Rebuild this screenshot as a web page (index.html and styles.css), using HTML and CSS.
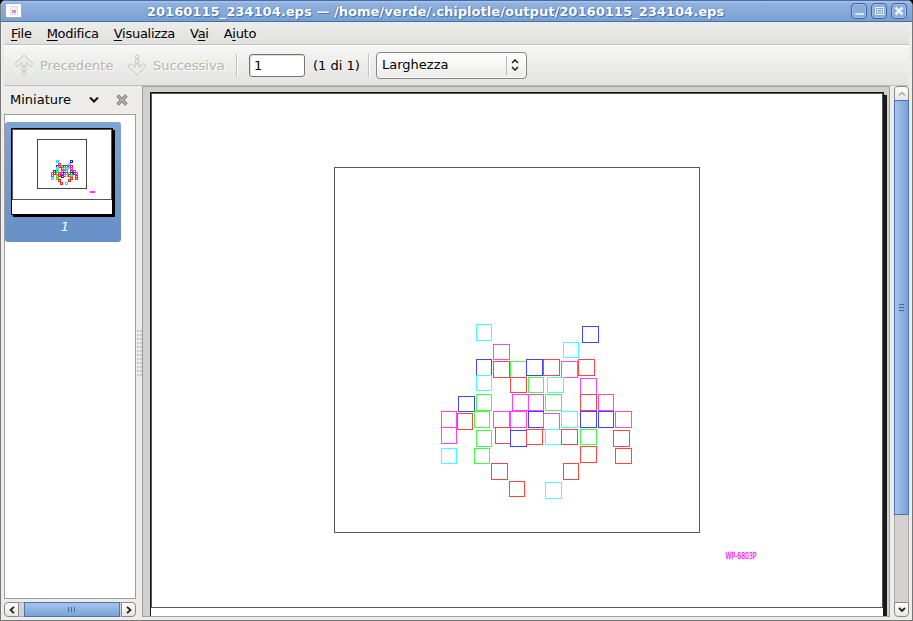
FILE: index.html
```
<!DOCTYPE html>
<html lang="it">
<head>
<meta charset="utf-8">
<title>20160115_234104.eps</title>
<link rel="stylesheet" href="styles.css">
</head>
<body>
<div class="window">
  <header class="titlebar">
    <svg class="app-icon" width="16" height="14" viewBox="0 0 16 14"><path d="M0 0h16v14H0z" fill="#aaa"/><path d="M0 0h15v13H0z" fill="#fff"/><path d="M4.500 2.500h7v8h-7z" fill="#f5eff8" stroke="#ddd"/><path d="M6 6h4v3H6z" fill="#b69ad6"/></svg>
    <h1>20160115_234104.eps — /home/verde/.chiplotle/output/20160115_234104.eps</h1>
    <div class="controls">
      <button aria-label="Riduci"><svg width="14" height="14"><path d="M3.500 9.500h8v1h-8z" fill="#fff" stroke="#d9e6f8"/></svg></button>
      <button aria-label="Massimizza"><svg width="14" height="14" fill="none" stroke="#eef4fc" shape-rendering="crispEdges"><path d="M3.500 3.500h8v7h-8z"/><path d="M5.500 5.500h4v3h-4z" stroke="#d4e2f5"/></svg></button>
      <button aria-label="Chiudi"><svg width="14" height="14"><path d="M3.500 3.500l7 7m0-7l-7 7" stroke="#e9f1fc" stroke-width="2.500"/></svg></button>
    </div>
  </header>
  <nav class="menubar"><span><u>F</u>ile</span><span><u>M</u>odifica</span><span><u>V</u>isualizza</span><span>V<u>a</u>i</span><span>A<u>i</u>uto</span></nav>
  <div class="toolbar">
    <svg class="arrow" width="20" height="22" viewBox="0 0 20 22"><g fill="#ededec" stroke="#c4c4c1"><path d="M10 1l9 9-2.500 2.500L12 8.500v3.500H8V8.500l-4.500 4L1 10z"/><circle cx="10" cy="14.500" r="2"/><circle cx="10" cy="19" r="2"/></g></svg>
    <span class="disabled prev">Precedente</span>
    <svg class="arrow" width="20" height="22" viewBox="0 0 20 22"><g fill="#ededec" stroke="#c4c4c1"><path d="M10 21l9-9-2.500-2.500L12 13.500V10H8v3.500l-4.500-4L1 12z"/><circle cx="10" cy="7.500" r="2"/><circle cx="10" cy="3" r="2"/></g></svg>
    <span class="disabled next">Successiva</span>
    <i class="divider"></i>
    <div class="page-field">1</div>
    <span class="count">(1 di 1)</span>
    <i class="divider second"></i>
    <div class="zoom"><span>Larghezza</span><i></i><svg width="8" height="12" viewBox="0 0 8 12" fill="none" stroke="#222" stroke-width="1.600"><path d="M1 4l3-3 3 3M1 8l3 3 3-3"/></svg></div>
  </div>
  <main>
    <aside>
      <div class="side-head"><span>Miniature</span><svg class="chev" width="10" height="6" viewBox="0 0 10 6"><path d="M1 .5l4 4 4-4" fill="none" stroke="#111" stroke-width="2"/></svg><svg class="close" width="12" height="12" viewBox="0 0 12 12"><path d="M1.500 1.500l9 9m0-9l-9 9" stroke="#7d7f7a" stroke-width="3.400"/><path d="M2 2l8 8m0-8l-8 8" stroke="#b8bab5" stroke-width="1.400"/></svg></div>
      <div class="thumbs">
        <div class="thumb">
          <svg id="mini" width="104" height="89" viewBox="0 0 104 89" shape-rendering="crispEdges">
            <path d="M2 2h102v87H2z"/><path d="M0 0h102v87H0z"/><path d="M1 1h100v85H1z" fill="#fff"/>
            <path d="M1.500 71.500V1.500h99v70z" fill="none" stroke="#555"/>
            <path d="M26.500 11.500h49v49h-49z" fill="none" stroke="#444"/>
            <g id="mini-cells" fill="none"></g><path d="M79 63h5v2h-5z" fill="#f3f"/>
          </svg>
          <span>1</span>
        </div>
      </div>
      <div class="hscroll">
        <div class="sbtn left"><svg width="6" height="8" viewBox="0 0 6 8"><path d="M5 .8L1.500 4 5 7.200" fill="none" stroke="#222" stroke-width="1.800"/></svg></div>
        <div class="htrack"><div class="hthumb"><b></b><b></b><b></b></div></div>
        <div class="sbtn right"><svg width="6" height="8" viewBox="0 0 6 8"><path d="M1 .8L4.500 4 1 7.200" fill="none" stroke="#222" stroke-width="1.800"/></svg></div>
      </div>
    </aside>
    <div class="splitter"></div>
    <section class="viewer">
      <svg width="746" height="529" viewBox="143 87 746 529" shape-rendering="crispEdges">
        <path d="M153 95h734v521H153z" fill="#1a1a1a"/>
        <path d="M150 92h734v524H150z" fill="#161616"/>
        <path d="M151 93h732v523H151z" fill="#555"/>
        <path d="M152 94h730v522H152z" fill="#fff"/>
        <path d="M151 607.500h732" stroke="#555"/>
        <path d="M151 608h1v8h-1zM882 608h1v8h-1z" fill="#fff"/>
        <path d="M334.500 167.500h365v365h-365z" fill="none" stroke="#555"/>
        <g id="cells" fill="none"></g>
        <text class="plotter" x="725.500" y="558.500" textLength="31" lengthAdjust="spacingAndGlyphs">WP-6803P</text>
      </svg>
    </section>
    <div class="vscroll">
      <div class="sbtn up"><svg width="8" height="6" viewBox="0 0 8 6"><path d="M1 4.500l3-3 3 3" fill="none" stroke="#aaa" stroke-width="1.500"/></svg></div>
      <div class="vtrack"><div class="vthumb"><b></b><b></b><b></b></div></div>
      <div class="sbtn down"><svg width="8" height="6" viewBox="0 0 8 6"><path d="M1 1l3 3 3-3" fill="none" stroke="#222" stroke-width="1.800"/></svg></div>
    </div>
  </main>
</div>
<script src="plot.js"></script>
</body>
</html>
```
FILE: plot.js
```
// Each cell: colour, left, top, right, bottom
const cells = `
c 476 324 491 340;m 493 344 509 359;b 582 326 598 342;c 563 342 578 357
b 476 359 491 375;r 493 361 509 377;g 510 361 526 377;b 526 359 542 375
r 543 359 559 375;m 561 361 577 377;r 578 359 594 375
c 476 375 491 390;r 510 377 526 392;g 528 377 543 392;c 547 377 563 392
m 580 378 596 394;b 458 396 474 411;g 476 394 491 410;m 512 394 528 410
m 528 394 543 410;g 545 394 561 410;r 580 394 596 410;m 598 394 613 410
m 441 411 456 427;m 441 427 456 443;r 457 413 472 429;g 474 411 489 427
m 493 411 509 427;m 510 411 526 427;b 528 411 543 427;m 543 413 559 429
c 561 411 577 427;b 580 411 596 427;b 598 411 613 427;m 615 411 631 427
g 476 430 491 446;r 495 427 510 443;b 510 430 526 446;r 526 429 542 444
c 545 429 561 444;r 561 429 577 444;g 580 429 596 444;r 613 430 629 446
c 441 448 456 463;g 474 448 489 463;r 580 446 596 462;r 615 448 631 463
r 491 463 507 479;r 563 463 578 479;r 509 481 524 496;c 545 482 561 498`
  .trim().split(/[;\n]/).map(s => s.split(' '));
const full = { c: '#4ff', m: '#f4f', b: '#44f', r: '#f44', g: '#4f4' };
const small = { c: '#2ee', m: '#f2e', b: '#22e', r: '#f22', g: '#2e2' };
const NS = 'http://www.w3.org/2000/svg';
function box(parent, x, y, w, h, color) {
  const r = document.createElementNS(NS, 'rect');
  Object.entries({ x, y, width: w, height: h, stroke: color })
    .forEach(([k, v]) => r.setAttribute(k, v));
  parent.append(r);
}
const main = document.getElementById('cells');
const mini = document.getElementById('mini-cells');
for (const [c, l, t, r, b] of cells) {
  box(main, +l + 0.5, +t + 0.5, r - l, b - t, full[c]);
  box(mini, Math.floor((l - 151) * 0.1366) + 1.5, Math.floor((t - 93) * 0.1366) + 1.5, 2, 2, small[c]);
}
```
FILE: styles.css
```
* { box-sizing: border-box; }
body { margin: 0; font: 13px/16px "DejaVu Sans", sans-serif; color: #000; background: #000; overflow: hidden; }
.window { width: 913px; height: 621px; display: flex; flex-direction: column; background: #edeceb; border: solid #777; border-width: 0 1px 1px; border-radius: 6px 6px 0 0; overflow: hidden; }
.titlebar { height: 22px; flex: none; display: flex; align-items: center; padding: 0 5px; background: linear-gradient(#456a9f 0 1px, #a5c2eb 1px 2px, #91b1df 3px, #79a0d3 21px, #456fa9 21px); }
.app-icon { flex: none; }
h1 { flex: 1; margin: 0; padding: 1px 2px 0 0; letter-spacing: .05px; font: bold 13px/18px "DejaVu Sans", sans-serif; color: #fff; text-align: center; white-space: nowrap; text-shadow: 1px 1px 0 #4a75b0, -1px 0 0 #5d87bf; }
.controls { display: flex; gap: 4px; }
.controls button { width: 16px; height: 16px; padding: 0; border: 1px solid #3c659d; border-radius: 4px; background: #8bacd9; display: flex; box-shadow: inset 0 0 0 1px #a5c0e6; }
.menubar { height: 23px; flex: none; margin: 0 3px; padding: 4px 7px 0; display: flex; gap: 15px; letter-spacing: -.28px; background: linear-gradient(#ececeb, #e1e1df); border-bottom: 1px solid #c0c0bd; }
u { text-underline-offset: 2px; text-decoration-thickness: 1px; text-decoration-skip-ink: none; }
.toolbar { height: 41px; flex: none; margin: 0 3px; padding-left: 10px; display: flex; align-items: center; background: linear-gradient(#fff 0 1px, #f5f5f3 2px, #e3e3e1); border-bottom: 1px solid #bdbdb9; }
.arrow { flex: none; }
.disabled { color: #b5b5b1; text-shadow: 1px 1px #fff; }
.prev { width: 93px; padding: 2px 0 0 6px; }
.next { width: 89px; padding: 2px 0 0 6px; }
.divider { width: 2px; height: 23px; flex: none; background: #c2c2bf; border-right: 1px solid #fff; }
.page-field { width: 56px; height: 23px; margin-left: 11px; border: 1px solid #777370; border-radius: 3px; background: #fff; padding: 3px 4px; box-shadow: inset 1px 1px #ddd; }
.count { width: 56px; padding: 2px 0 0 8px; white-space: nowrap; }
.second { margin-left: 7px; }
.zoom { width: 151px; height: 27px; margin-left: 6px; padding: 0 7px 0 5px; border: 1px solid #888482; border-radius: 4px; display: flex; align-items: center; background: linear-gradient(#fff, #f6f6f5 50%, #ebebe9); box-shadow: inset 0 0 0 1px #fff; }
.zoom span { flex: 1; }
.zoom i { width: 1px; height: 19px; background: #bbb; margin-right: 4px; }
main { flex: 1; min-height: 0; display: flex; padding: 0 3px 3px; }
aside { width: 132px; display: flex; flex-direction: column; }
.side-head { height: 28px; display: flex; align-items: center; padding-left: 6px; }
.side-head span { width: 79px; }
.close { margin-left: 17px; }
.thumbs { height: 485px; border: 1px solid #a19f9b; background: #fff; padding: 7px 0; }
.thumb { width: 116px; height: 120px; border-radius: 3px; background: linear-gradient(#7ea3d5, #668fc5); padding: 6px 0 0 6px; }
.thumb svg { display: block; }
.thumb span { display: block; width: 108px; margin-top: 2px; text-align: center; color: #fff; font-style: italic; }
.hscroll { height: 15px; margin-top: 3px; display: flex; }
.sbtn { flex: none; width: 15px; height: 15px; border: 1px solid #8b8985; background: linear-gradient(#fff, #e6e6e4); display: flex; align-items: center; justify-content: center; }
.left { border-radius: 4px 0 0 4px; }
.right { border-radius: 0 4px 4px 0; }
.up { border-radius: 4px 4px 0 0; }
.down { border-radius: 0 0 4px 4px; }
.htrack { flex: 1; padding-left: 5px; background: #d3d2d0; border: solid #aaa8a4; border-width: 1px 0; }
.hthumb { width: 96px; height: 15px; margin-top: -1px; border: 1px solid #4a75ad; background: linear-gradient(#a6c4eb, #7ba1d5); display: flex; justify-content: center; align-items: center; gap: 2px; padding-right: 2px; }
.hthumb b { width: 1px; height: 5px; background: #416a9e; }
.splitter { width: 6px; background: radial-gradient(circle at 1px 1px, #cbc9c5 1px, transparent 1.100px) 1px 0 / 3px 4px; background-color: #edeceb; background-clip: content-box; padding: 242px 0 241px; }
.viewer { width: 748px; height: 531px; border: 1px solid #a19f9b; background: #d0d0ce; overflow: hidden; }
.viewer svg { display: block; }
.plotter { font: 8px "DejaVu Sans", sans-serif; fill: #f2f; stroke: #f2f; stroke-width: .3px; }
.vscroll { width: 15px; margin-left: 4px; display: flex; flex-direction: column; }
.vtrack { flex: 1; background: #d3d2d0; border: solid #aaa8a4; border-width: 0 1px; }
.vthumb { position: relative; width: 15px; height: 415px; margin: -1px 0 0 -1px; border: 1px solid #4a75ad; background: linear-gradient(90deg, #a6c4eb, #7ba1d5); display: flex; flex-direction: column; align-items: center; justify-content: center; gap: 2px; }
.vthumb b { width: 5px; height: 1px; background: #416a9e; }
```
